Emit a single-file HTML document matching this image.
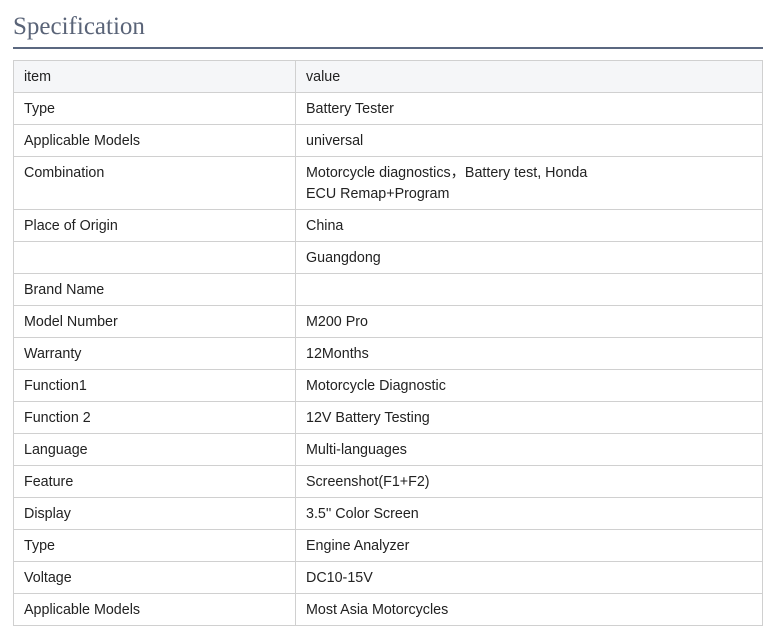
<!DOCTYPE html>
<html><head><style>
body{margin:0;background:#fff;font-family:"Liberation Sans",Arial,sans-serif;}
h2{position:absolute;left:13px;top:11px;margin:0;font-family:"Liberation Serif",serif;font-weight:normal;font-size:25px;color:#5a6478;line-height:32px;}
.line{position:absolute;left:13px;top:47px;width:750px;height:2px;background:#5b6880;}
table{position:absolute;left:13px;top:60px;width:750px;border-collapse:collapse;font-size:14.3px;color:#222;}
td{border:1px solid #d0d0d0;height:29px;padding:2px 10px 0;line-height:21px;vertical-align:middle;}
td:first-child{width:261px;}
tr.h td{background:#f5f6f8;}
td.top{vertical-align:top;padding-top:6px;height:46px;}
</style></head><body>
<h2>Specification</h2>
<div class="line"></div>
<table>
<tr class="h"><td>item</td><td>value</td></tr>
<tr><td>Type</td><td>Battery Tester</td></tr>
<tr><td>Applicable Models</td><td>universal</td></tr>
<tr><td class="top">Combination</td><td class="top">Motorcycle diagnostics，Battery test, Honda<br>ECU Remap+Program</td></tr>
<tr><td>Place of Origin</td><td>China</td></tr>
<tr><td></td><td>Guangdong</td></tr>
<tr><td>Brand Name</td><td></td></tr>
<tr><td>Model Number</td><td>M200 Pro</td></tr>
<tr><td>Warranty</td><td>12Months</td></tr>
<tr><td>Function1</td><td>Motorcycle Diagnostic</td></tr>
<tr><td>Function 2</td><td>12V Battery Testing</td></tr>
<tr><td>Language</td><td>Multi-languages</td></tr>
<tr><td>Feature</td><td>Screenshot(F1+F2)</td></tr>
<tr><td>Display</td><td>3.5'' Color Screen</td></tr>
<tr><td>Type</td><td>Engine Analyzer</td></tr>
<tr><td>Voltage</td><td>DC10-15V</td></tr>
<tr><td>Applicable Models</td><td>Most Asia Motorcycles</td></tr>
</table>
</body></html>
